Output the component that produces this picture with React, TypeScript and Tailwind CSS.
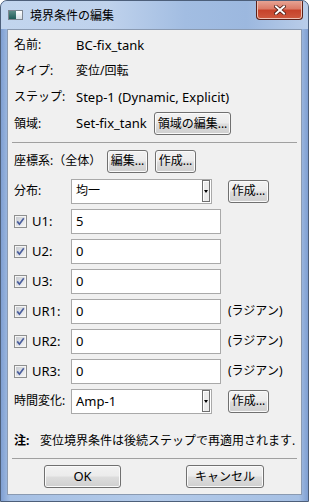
import type { ReactNode } from "react";

// latin text in the dialog font runs a little wider than the kana/kanji
const latin = "text-[13px]";

function Btn({ children, className = "" }: { children: ReactNode; className?: string }) {
  return (
    <div
      className={`flex h-[23px] items-center justify-center rounded-[3px] border border-[#707070] bg-[linear-gradient(180deg,#f2f2f2_0%,#ebebeb_48%,#dddddd_52%,#cfcfcf_100%)] shadow-[inset_0_0_0_1px_#fafafa] whitespace-nowrap ${className}`}
    >
      {children}
    </div>
  );
}

function Check() {
  return (
    <div className="h-[13px] w-[13px] shrink-0 border border-[#8e8f8f] bg-[#f4f4f4] p-px">
      <div className="flex h-full w-full items-center justify-center bg-[linear-gradient(135deg,#c9ccd1,#f4f4f5)]">
        <svg width="9" height="9" viewBox="0 0 9 9">
          <path d="M1.2 4.4 L3.4 7.2 L7.8 1.2" fill="none" stroke="#4b5f9e" strokeWidth="1.7" />
        </svg>
      </div>
    </div>
  );
}

function Field({ value }: { value: string }) {
  return (
    <div className={`flex h-[25px] w-[150px] shrink-0 items-center border border-[#a9a9a9] bg-white pl-[4px] ${latin}`}>
      {value}
    </div>
  );
}

function Combo({ value, className = "" }: { value: string; className?: string }) {
  return (
    <div className="flex h-[25px] w-[141px] shrink-0 items-center border border-[#a9a9a9] bg-white pl-[4px] pr-px">
      <span className={`flex-1 ${className}`}>{value}</span>
      <div className="flex h-[22px] w-[8px] items-center justify-center border border-[#6f6f6f] bg-[#ececec] shadow-[inset_1px_1px_0_#ffffff]">
        <svg width="4" height="3" viewBox="0 0 4 3">
          <path d="M0 0 H4 L2 3 Z" fill="#000" />
        </svg>
      </div>
    </div>
  );
}

function DofRow({ label, value, radian }: { label: string; value: string; radian?: boolean }) {
  return (
    <div className="flex h-[30px] items-center pl-[6px]">
      <Check />
      <span className={`ml-[5px] w-[39px] ${latin}`}>{label}</span>
      <Field value={value} />
      {radian && <span className="ml-[7px]">(ラジアン)</span>}
    </div>
  );
}

const dofs = [
  { label: "U1:", value: "5" },
  { label: "U2:", value: "0" },
  { label: "U3:", value: "0" },
  { label: "UR1:", value: "0", radian: true },
  { label: "UR2:", value: "0", radian: true },
  { label: "UR3:", value: "0", radian: true },
];

export default function App() {
  return (
    <div className="flex h-[502px] w-[309px] flex-col overflow-hidden rounded-t-[7px] border border-[#4d5f7a] bg-[linear-gradient(90deg,#7f9fd2_0%,#a6c0e4_3%,#b3cae9_50%,#a6c0e4_97%,#7f9fd2_100%)] text-[12px] leading-none text-black [font-family:'Noto_Sans','Noto_Sans_CJK_JP',sans-serif]">
      {/* title bar */}
      <div className="flex h-[28px] shrink-0 items-start bg-[linear-gradient(90deg,#c2d5ee_0%,#bfd2ec_35%,#a2bde2_60%,#9cb8df_80%,#b9cde9_100%)]">
        <div className="ml-[7px] mt-[9px] flex h-[10px] w-[15px] border border-[#7d8590] bg-white">
          <div className="h-full w-[7px] bg-[linear-gradient(180deg,#5c8b86,#1f5c58)]" />
          <div className="flex-1 bg-[linear-gradient(180deg,#ffffff,#d5dde6)]" />
        </div>
        <span className="ml-[7px] mt-[9px]">境界条件の編集</span>
        <div className="-mt-px ml-auto mr-[5px] flex h-[20px] w-[47px] items-center justify-center rounded-b-[4px] border border-t-0 border-[#5b2017] bg-[linear-gradient(180deg,#e8a899_0%,#dc7c68_45%,#c7432b_55%,#cf5a3f_100%)] shadow-[inset_0_0_0_1px_#eec0b4]">
          <svg width="12" height="10" viewBox="0 0 12 10">
            <path d="M2 1.5 L10 8.5 M10 1.5 L2 8.5" stroke="#4a1a12" strokeWidth="3.6" strokeLinecap="square" />
            <path d="M2 1.5 L10 8.5 M10 1.5 L2 8.5" stroke="#ffffff" strokeWidth="2" strokeLinecap="square" />
          </svg>
        </div>
      </div>

      {/* client area */}
      <div className="mx-[6px] mb-[6px] flex flex-1 flex-col border border-[#8a9ab1] bg-[#f0f0f0]">
        <div className="mt-[2px] flex h-[26px] items-center pl-[6px]">
          <span className="w-[62px]">名前:</span>
          <span className={latin}>BC-fix_tank</span>
        </div>
        <div className="flex h-[26px] items-center pl-[6px]">
          <span className="w-[62px]">タイプ:</span>
          <span>変位/回転</span>
        </div>
        <div className="flex h-[26px] items-center pl-[6px]">
          <span className="w-[62px]">ステップ:</span>
          <span className={latin}>Step-1 (Dynamic, Explicit)</span>
        </div>
        <div className="flex h-[27px] items-center pl-[6px]">
          <span className="w-[62px]">領域:</span>
          <span className={`w-[78px] ${latin}`}>Set-fix_tank</span>
          <Btn className="w-[77px]">領域の編集...</Btn>
        </div>

        <div className="mx-[4px] mt-[5px] h-px bg-[#a0a0a0]" />

        <div className="mt-[3px] flex h-[30px] items-center pl-[6px]">
          <span className="w-[93px]">座標系:（全体）</span>
          <Btn className="w-[41px]">編集...</Btn>
          <Btn className="ml-[7px] w-[41px]">作成...</Btn>
        </div>
        <div className="flex h-[30px] items-center pl-[6px]">
          <span className="w-[57px]">分布:</span>
          <Combo value="均一" />
          <Btn className="ml-[16px] w-[41px]">作成...</Btn>
        </div>

        {dofs.map((d) => (
          <DofRow key={d.label} label={d.label} value={d.value} radian={d.radian} />
        ))}

        <div className="flex h-[30px] items-center pl-[6px]">
          <span className="w-[57px]">時間変化:</span>
          <Combo value="Amp-1" className={latin} />
          <Btn className="ml-[16px] w-[41px]">作成...</Btn>
        </div>

        <div className="mt-[12px] flex h-[26px] items-center pl-[6px]">
          <span className="w-[26px] font-bold">注:</span>
          <span>変位境界条件は後続ステップで再適用されます.</span>
        </div>

        <div className="mx-[4px] mt-[4px] h-px bg-[#a0a0a0]" />

        <div className="mt-[6px] flex justify-between pl-[36px] pr-[37px]">
          <Btn className={`w-[77px] ${latin}`}>OK</Btn>
          <Btn className="w-[78px]">キャンセル</Btn>
        </div>
      </div>
    </div>
  );
}
